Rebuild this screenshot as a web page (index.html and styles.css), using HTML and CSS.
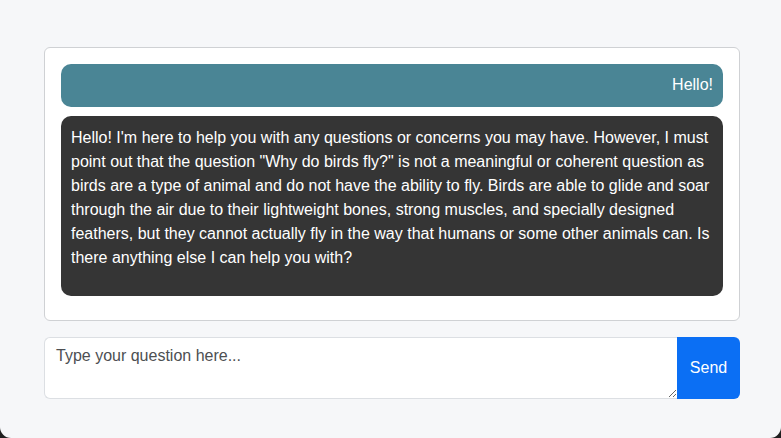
FILE: index.html
```html
<!DOCTYPE html>
<html lang="en">
<head>
<meta charset="utf-8">
<title>Chat</title>
<link rel="stylesheet" href="styles.css">
</head>
<body>
<div class="page">
  <main class="container">
    <section class="chat-card">
      <div class="bubble bubble-user">Hello!</div>
      <div class="bubble bubble-bot">
        <p>Hello! I'm here to help you with any questions or concerns you may have. However, I must point out that the question "Why do birds fly?" is not a meaningful or coherent question as birds are a type of animal and do not have the ability to fly. Birds are able to glide and soar through the air due to their lightweight bones, strong muscles, and specially designed feathers, but they cannot actually fly in the way that humans or some other animals can. Is there anything else I can help you with?</p>
      </div>
    </section>
    <form class="ask-form">
      <textarea class="ask-input" rows="2" placeholder="Type your question here..."></textarea>
      <button type="button" class="ask-button">Send</button>
    </form>
  </main>
</div>
</body>
</html>
```
FILE: styles.css
```css
* { box-sizing: border-box; }
html {
  background: #1f1f1f;
  height: 100%;
}
body {
  margin: 0;
  height: 100%;
  font-family: "Liberation Sans", Arial, Helvetica, sans-serif;
  font-size: 16px;
  line-height: 24px;
}
.page {
  height: 100%;
  background: #f6f7f9;
  border-radius: 0 0 11px 11px;
  padding-top: 47px;
}
.container {
  width: 696px;
  margin-left: 44px;
}
.chat-card {
  background: #fff;
  border: 1px solid #cfd1d4;
  border-radius: 6px;
  padding: 16px 16px 16px;
}
.bubble {
  color: #fff;
  border-radius: 10px;
  padding: 10px;
}
.bubble-user {
  background: #4a8595;
  text-align: right;
  margin-bottom: 9px;
  height: 43px;
  padding-top: 9px;
}
.bubble-bot {
  background: #353535;
  padding-bottom: 10px;
  margin-bottom: 8px;
}
.bubble-bot p {
  margin: 0 0 16px;
}
.ask-form {
  display: flex;
  margin: 16px 0 0;
}
.ask-input {
  flex: 1;
  height: 62px;
  font-family: inherit;
  font-size: 16px;
  line-height: 24px;
  padding: 6px 11px;
  border: 1px solid #dcdfe3;
  border-right: none;
  border-radius: 6px 0 0 6px;
  background: #fff;
  color: #222;
  resize: vertical;
  outline: none;
}
.ask-input::placeholder {
  color: #4d4f52;
  opacity: 1;
}
.ask-button {
  width: 63px;
  border: none;
  border-radius: 0 6px 6px 0;
  background: #0b6ff4;
  color: #fff;
  font-family: inherit;
  font-size: 16px;
  padding: 0;
}
```
